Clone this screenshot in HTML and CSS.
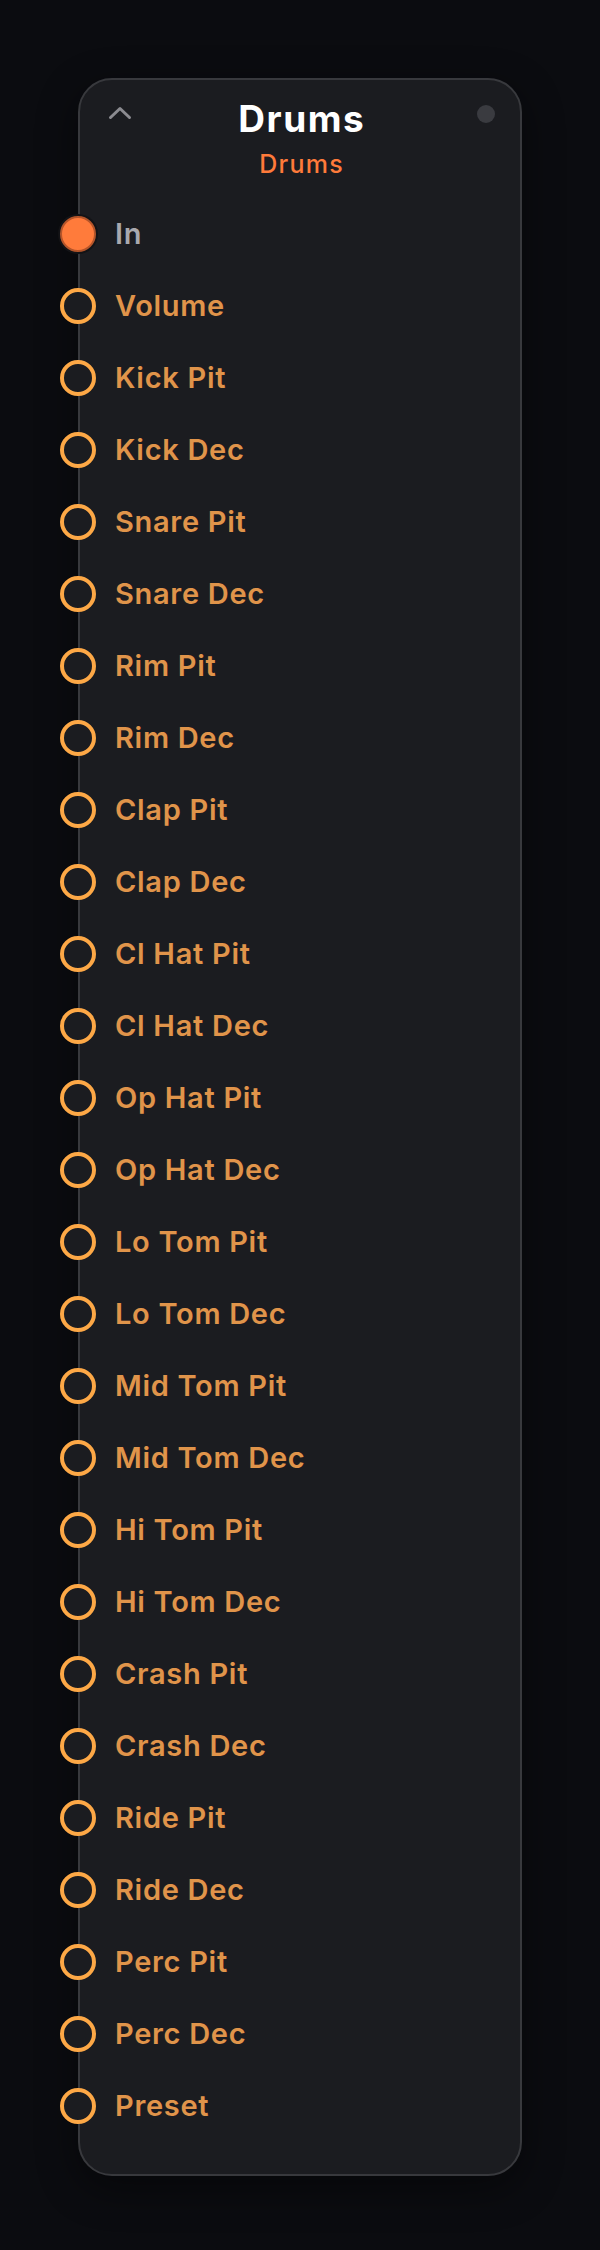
FILE: index.html
```html
<!DOCTYPE html>
<html>
<head>
<meta charset="utf-8">
<link rel="stylesheet" href="styles.css">
</head>
<body>
<div class="card">
  <div class="header">
    <svg class="chev" width="24" height="14" viewBox="0 0 24 14"><polyline points="2.5,11.5 12,2.5 21.5,11.5" fill="none" stroke="#8b8b90" stroke-width="3" stroke-linecap="round" stroke-linejoin="round"/></svg>
    <div class="title">Drums</div>
    <div class="dot"></div>
    <div class="subtitle">Drums</div>
  </div>
  <div class="ports">
    <div class="row"><span class="port filled"></span><span class="label in">In</span></div>
    <div class="row"><span class="port"></span><span class="label">Volume</span></div>
    <div class="row"><span class="port"></span><span class="label">Kick Pit</span></div>
    <div class="row"><span class="port"></span><span class="label">Kick Dec</span></div>
    <div class="row"><span class="port"></span><span class="label">Snare Pit</span></div>
    <div class="row"><span class="port"></span><span class="label">Snare Dec</span></div>
    <div class="row"><span class="port"></span><span class="label">Rim Pit</span></div>
    <div class="row"><span class="port"></span><span class="label">Rim Dec</span></div>
    <div class="row"><span class="port"></span><span class="label">Clap Pit</span></div>
    <div class="row"><span class="port"></span><span class="label">Clap Dec</span></div>
    <div class="row"><span class="port"></span><span class="label">Cl Hat Pit</span></div>
    <div class="row"><span class="port"></span><span class="label">Cl Hat Dec</span></div>
    <div class="row"><span class="port"></span><span class="label">Op Hat Pit</span></div>
    <div class="row"><span class="port"></span><span class="label">Op Hat Dec</span></div>
    <div class="row"><span class="port"></span><span class="label">Lo Tom Pit</span></div>
    <div class="row"><span class="port"></span><span class="label">Lo Tom Dec</span></div>
    <div class="row"><span class="port"></span><span class="label">Mid Tom Pit</span></div>
    <div class="row"><span class="port"></span><span class="label">Mid Tom Dec</span></div>
    <div class="row"><span class="port"></span><span class="label">Hi Tom Pit</span></div>
    <div class="row"><span class="port"></span><span class="label">Hi Tom Dec</span></div>
    <div class="row"><span class="port"></span><span class="label">Crash Pit</span></div>
    <div class="row"><span class="port"></span><span class="label">Crash Dec</span></div>
    <div class="row"><span class="port"></span><span class="label">Ride Pit</span></div>
    <div class="row"><span class="port"></span><span class="label">Ride Dec</span></div>
    <div class="row"><span class="port"></span><span class="label">Perc Pit</span></div>
    <div class="row"><span class="port"></span><span class="label">Perc Dec</span></div>
    <div class="row"><span class="port"></span><span class="label">Preset</span></div>
  </div>
</div>
</body>
</html>
```

FILE: styles.css
```css
html, body {
  margin: 0;
  padding: 0;
  background: #0b0c10;
}
body {
  font-family: Inter, "Noto Sans", sans-serif;
  width: 600px;
  height: 2250px;
  overflow: hidden;
}
.card {
  box-sizing: border-box;
  margin: 78px 0 0 78px;
  width: 444px;
  border: 2px solid #38393d;
  border-radius: 34px;
  background: #1b1c20;
  padding-bottom: 32px;
  box-shadow: 0 12px 40px rgba(0, 0, 0, 0.45);
}
.header {
  display: grid;
  grid-template-columns: 32px 1fr 40px;
  padding: 17px 14px 0 24px;
  row-gap: 8px;
}
.chev {
  grid-column: 1;
  grid-row: 1;
  align-self: start;
  justify-self: center;
  margin-top: 9px;
}
.title {
  grid-column: 2;
  grid-row: 1;
  text-align: center;
  color: #ffffff;
  font-size: 37px;
  line-height: 44px;
  font-weight: 700;
  letter-spacing: 1.5px;
  padding-left: 1.5px;
}
.dot {
  grid-column: 3;
  grid-row: 1;
  align-self: start;
  justify-self: center;
  margin-top: 8px;
  width: 18px;
  height: 18px;
  border-radius: 50%;
  background: #3a3b40;
}
.subtitle {
  grid-column: 2;
  grid-row: 2;
  text-align: center;
  color: #ff7a3a;
  font-size: 25px;
  line-height: 30px;
  font-weight: 500;
  letter-spacing: 1.3px;
  padding-left: 1.3px;
}
.ports {
  display: flex;
  flex-direction: column;
  margin-top: 19px;
}
.row {
  display: flex;
  align-items: center;
  height: 72px;
}
.port {
  box-sizing: border-box;
  width: 36px;
  height: 36px;
  margin-left: -20px;
  border-radius: 50%;
  border: 4px solid #fda846;
  background: #1b1c20;
  flex: none;
}
.port.filled {
  background: #ff7b3b;
  border: 2px solid #b5552a;
  box-shadow: 0 0 0 2px #131316;
}
.label {
  margin-left: 19px;
  font-size: 29px;
  font-weight: 600;
  color: #e0944a;
  line-height: 36px;
  letter-spacing: 0.7px;
}
.label.in {
  color: #a9a9ae;
}
```
